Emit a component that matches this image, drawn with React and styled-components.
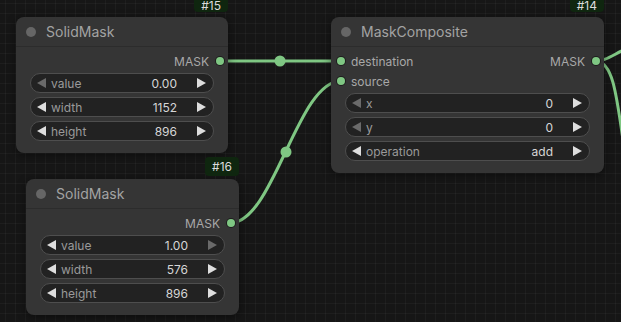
import React from "react";
import styled, { createGlobalStyle } from "styled-components";

const Global = createGlobalStyle`
  html, body { margin: 0; padding: 0; background: #161616; }
  body { font-family: Inter, "Liberation Sans", Arial, sans-serif; }
`;

const WIRE = "#7fc783";

const Canvas = styled.div`
  position: relative;
  width: 621px;
  height: 322px;
  overflow: hidden;
  background-color: #161616;
  background-image:
    linear-gradient(to right, rgba(255,255,255,0.035) 1px, transparent 1px),
    linear-gradient(to bottom, rgba(255,255,255,0.035) 1px, transparent 1px);
  background-size: 10px 10px;
  background-position: 5px 3px;
`;

const WireLayer = styled.svg`
  position: absolute;
  inset: 0;
  width: 621px;
  height: 322px;
  pointer-events: none;
`;

const NodeBox = styled.div`
  position: absolute;
  left: ${(p) => p.$x}px;
  top: ${(p) => p.$y}px;
  width: ${(p) => p.$w}px;
  background: #353535;
  border-radius: 8px;
  box-shadow: 0 2px 10px rgba(0, 0, 0, 0.45);
  display: flex;
  flex-direction: column;
`;

const Badge = styled.div`
  position: absolute;
  right: 0;
  bottom: calc(100% + ${(p) => p.$gap}px);
  box-sizing: border-box;
  height: ${(p) => p.$h}px;
  padding: 0 7px;
  border-radius: ${(p) => (p.$h < 19 ? "0 0 4px 4px" : "4px")};
  background: #0f260f;
  color: #dcdcdc;
  font-size: 12px;
  line-height: ${(p) => p.$h}px;
`;

const Title = styled.div`
  height: 29px;
  display: flex;
  align-items: center;
  border-bottom: 1px solid #2c2c2c;
  padding-left: 10px;
  gap: 10px;
  color: #a3a3a3;
  font-size: 14px;
`;

const TitleDot = styled.span`
  width: 10px;
  height: 10px;
  border-radius: 50%;
  background: #666;
`;

const Body = styled.div`
  padding: 4px 0 12px;
  display: flex;
  flex-direction: column;
`;

const SlotRow = styled.div`
  height: 20px;
  display: flex;
  align-items: center;
  justify-content: space-between;
  font-size: 12px;
  color: #a8a8a8;
`;

const Slot = styled.div`
  display: flex;
  align-items: center;
  gap: ${(p) => (p.$out ? "7px" : "6px")};
  padding: ${(p) => (p.$out ? "0 4px 0 0" : "0 0 0 6px")};
  margin-left: ${(p) => (p.$out ? "auto" : "0")};
`;

const SlotDot = styled.span`
  width: 8px;
  height: 8px;
  border-radius: 50%;
  background: ${WIRE};
  box-shadow: 0 0 0 1px #1e1e1e;
`;

const Widgets = styled.div`
  margin: 2px 14px 0;
  display: flex;
  flex-direction: column;
  gap: 4px;
`;

const Widget = styled.div`
  height: 18px;
  border: 1px solid #4e4e4e;
  border-radius: 10px;
  background: #222;
  display: flex;
  align-items: center;
  padding: 0 7px 0 6px;
  font-size: 12px;
`;

const Label = styled.span`
  color: #9a9a9a;
  margin-left: 5px;
  flex: 1;
`;

const Value = styled.span`
  color: #d6d6d6;
  margin-right: 20px;
`;

const Arrow = ({ dir, dim }) => (
  <svg width="9" height="10" viewBox="0 0 9 10">
    <polygon
      points={dir === "left" ? "9,0 9,10 0,5" : "0,0 0,10 9,5"}
      fill={dim ? "#6a6a6a" : "#dedede"}
    />
  </svg>
);

const Node = ({ id, x, y, w, title, inputs = [], outputs = [], widgets, badgeGap, badgeH }) => {
  const rows = Math.max(inputs.length, outputs.length);
  return (
    <NodeBox $x={x} $y={y} $w={w}>
      <Badge $gap={badgeGap} $h={badgeH}>#{id}</Badge>
      <Title>
        <TitleDot />
        {title}
      </Title>
      <Body>
        {Array.from({ length: rows }).map((_, i) => (
          <SlotRow key={i}>
            {inputs[i] && (
              <Slot>
                <SlotDot />
                {inputs[i]}
              </Slot>
            )}
            {outputs[i] && (
              <Slot $out>
                {outputs[i]}
                <SlotDot />
              </Slot>
            )}
          </SlotRow>
        ))}
        <Widgets>
          {widgets.map((wd) => (
            <Widget key={wd.label}>
              <Arrow dir="left" dim={wd.dimL} />
              <Label>{wd.label}</Label>
              <Value>{wd.value}</Value>
              <Arrow dir="right" dim={wd.dimR} />
            </Widget>
          ))}
        </Widgets>
      </Body>
    </NodeBox>
  );
};

export default function App() {
  return (
    <>
      <Global />
      <Canvas>
        <WireLayer viewBox="0 0 621 322">
          <g stroke={WIRE} strokeWidth="3" fill="none" strokeLinecap="round">
            <path d="M220,61 L341,61" />
            <path d="M230,223 C274,223 297,81 341,81" />
            <path d="M596,61 C606,61 612,55 632,46" />
            <path d="M596,61 C612,62 616,90 623,140" />
          </g>
          <circle cx="280" cy="61" r="5.5" fill={WIRE} />
          <circle cx="286" cy="152" r="5.5" fill={WIRE} />
        </WireLayer>
        <Node
          id={15}
          x={16}
          y={17}
          w={212}
          title="SolidMask"
          outputs={["MASK"]}
          badgeGap={5}
          badgeH={12}
          widgets={[
            { label: "value", value: "0.00", dimL: true },
            { label: "width", value: "1152" },
            { label: "height", value: "896" },
          ]}
        />
        <Node
          id={16}
          x={26}
          y={179}
          w={213}
          title="SolidMask"
          outputs={["MASK"]}
          badgeGap={3}
          badgeH={19}
          widgets={[
            { label: "value", value: "1.00", dimR: true },
            { label: "width", value: "576" },
            { label: "height", value: "896" },
          ]}
        />
        <Node
          id={14}
          x={331}
          y={17}
          w={273}
          title="MaskComposite"
          inputs={["destination", "source"]}
          outputs={["MASK"]}
          badgeGap={5}
          badgeH={12}
          widgets={[
            { label: "x", value: "0", dimL: true },
            { label: "y", value: "0", dimL: true },
            { label: "operation", value: "add" },
          ]}
        />
      </Canvas>
    </>
  );
}
